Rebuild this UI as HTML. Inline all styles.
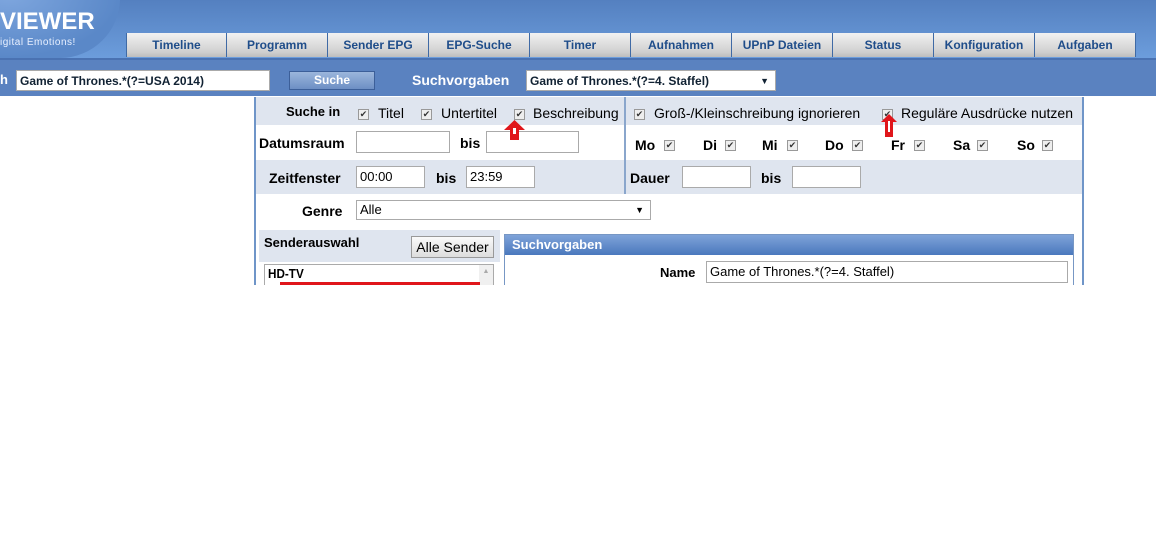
<!DOCTYPE html>
<html><head><meta charset="utf-8"><style>
*{margin:0;padding:0;box-sizing:border-box}
body{width:1156px;height:540px;background:#fff;position:relative;overflow:hidden;font-family:"Liberation Sans",Arial,sans-serif;font-size:13px;color:#000}
.a{position:absolute}
#hdr{left:0;top:0;width:1156px;height:58px;background:linear-gradient(180deg,#5480c0 0%,#6c9ddc 100%)}
#logo{left:-40px;top:-30px;width:160px;height:88px;border-radius:0 0 60px 0;background:radial-gradient(ellipse at 30% 30%,#7ea6de,#5a88c8 70%);}
.tab{top:33px;height:24px;width:101px;background:linear-gradient(180deg,#f2f2f2,#cfcfcf 80%,#bdbdbd);border-right:1px solid #3f6aa5;text-align:center;font-weight:bold;font-size:12px;color:#1f4d8a;line-height:25px}
#bar{left:0;top:58px;width:1156px;height:38px;background:#5a82c0;border-top:2px solid #4a72b2}
.in{background:#fff;border:1px solid #aaa;height:22px;font-size:12px;padding-left:3px;line-height:20px}
.lbl{font-weight:bold;font-size:13px}
.cb{display:inline-block;width:11px;height:11px;border:1px solid #999;background:#eee;font-size:9px;line-height:9px;text-align:center;color:#333}
</style></head><body>
<div id="hdr" class="a"></div>
<div id="logo" class="a"></div>
<div class="a" style="left:0;top:8px;font-size:24px;font-weight:bold;color:#fff;letter-spacing:0px">VIEWER</div>
<div class="a" style="left:0;top:37px;font-size:10px;color:#e8f0ff;letter-spacing:0.5px">igital Emotions!</div>
<div class="a tab" style="left:126px;border-left:1px solid #3f6aa5">Timeline</div>
<div class="a tab" style="left:227px">Programm</div>
<div class="a tab" style="left:328px">Sender EPG</div>
<div class="a tab" style="left:429px">EPG-Suche</div>
<div class="a tab" style="left:530px">Timer</div>
<div class="a tab" style="left:631px">Aufnahmen</div>
<div class="a tab" style="left:732px">UPnP Dateien</div>
<div class="a tab" style="left:833px">Status</div>
<div class="a tab" style="left:934px">Konfiguration</div>
<div class="a tab" style="left:1035px">Aufgaben</div>
<div id="bar" class="a"></div>
<div class="a" style="left:0;top:72px;color:#fff;font-weight:bold;font-size:13px">h</div>
<div class="a in" style="left:16px;top:70px;width:254px;height:21px;font-weight:bold;color:#123">Game of Thrones.*(?=USA 2014)</div>
<div class="a" style="left:289px;top:71px;width:86px;height:19px;background:linear-gradient(#9bb6dc,#6d8fc4);border:1px solid #3c5f99;color:#fff;font-weight:bold;font-size:12px;text-align:center;line-height:17px">Suche</div>
<div class="a" style="left:412px;top:72px;color:#fff;font-weight:bold;font-size:14px">Suchvorgaben</div>
<div class="a in" style="left:526px;top:70px;width:250px;height:21px;font-weight:bold;color:#123">Game of Thrones.*(?=4. Staffel)<span style="position:absolute;right:6px;font-size:9px">▼</span></div>

<div class="a" style="left:254px;top:97px;width:830px;height:188px;border-left:2px solid #6f95c8;border-right:2px solid #6f95c8"></div>
<div class="a" style="left:256px;top:97px;width:826px;height:28px;background:#dfe5ef"></div>
<div class="a" style="left:256px;top:160px;width:826px;height:34px;background:#dfe5ef"></div>
<div class="a" style="left:624px;top:97px;width:2px;height:97px;background:#8aa6cc"></div>

<div class="a lbl" style="left:286px;top:104px">Suche in</div>
<div class="a" style="left:358px;top:105px"><span class="cb">✔</span></div>
<div class="a" style="left:378px;top:105px;font-size:14px">Titel</div>
<div class="a" style="left:421px;top:105px"><span class="cb">✔</span></div>
<div class="a" style="left:441px;top:105px;font-size:14px">Untertitel</div>
<div class="a" style="left:514px;top:105px"><span class="cb">✔</span></div>
<div class="a" style="left:533px;top:105px;font-size:14px">Beschreibung</div>
<div class="a" style="left:634px;top:105px"><span class="cb">✔</span></div>
<div class="a" style="left:654px;top:105px;font-size:14px">Groß-/Kleinschreibung ignorieren</div>
<div class="a" style="left:882px;top:105px"><span class="cb">✔</span></div>
<div class="a" style="left:901px;top:105px;font-size:14px">Reguläre Ausdrücke nutzen</div>

<div class="a lbl" style="left:259px;top:135px;font-size:14px">Datumsraum</div>
<div class="a in" style="left:356px;top:131px;width:94px"></div>
<div class="a lbl" style="left:460px;top:135px;font-size:14px">bis</div>
<div class="a in" style="left:486px;top:131px;width:93px"></div>
<div class="a lbl" style="left:635px;top:137px;font-size:14px">Mo</div><div class="a" style="left:664px;top:136px"><span class="cb">✔</span></div>
<div class="a lbl" style="left:703px;top:137px;font-size:14px">Di</div><div class="a" style="left:725px;top:136px"><span class="cb">✔</span></div>
<div class="a lbl" style="left:762px;top:137px;font-size:14px">Mi</div><div class="a" style="left:787px;top:136px"><span class="cb">✔</span></div>
<div class="a lbl" style="left:825px;top:137px;font-size:14px">Do</div><div class="a" style="left:852px;top:136px"><span class="cb">✔</span></div>
<div class="a lbl" style="left:891px;top:137px;font-size:14px">Fr</div><div class="a" style="left:914px;top:136px"><span class="cb">✔</span></div>
<div class="a lbl" style="left:953px;top:137px;font-size:14px">Sa</div><div class="a" style="left:977px;top:136px"><span class="cb">✔</span></div>
<div class="a lbl" style="left:1017px;top:137px;font-size:14px">So</div><div class="a" style="left:1042px;top:136px"><span class="cb">✔</span></div>

<div class="a lbl" style="left:269px;top:170px;font-size:14px">Zeitfenster</div>
<div class="a in" style="left:356px;top:166px;width:69px;font-size:13px">00:00</div>
<div class="a lbl" style="left:436px;top:170px;font-size:14px">bis</div>
<div class="a in" style="left:466px;top:166px;width:69px;font-size:13px">23:59</div>
<div class="a lbl" style="left:630px;top:170px;font-size:14px">Dauer</div>
<div class="a in" style="left:682px;top:166px;width:69px"></div>
<div class="a lbl" style="left:761px;top:170px;font-size:14px">bis</div>
<div class="a in" style="left:792px;top:166px;width:69px"></div>

<div class="a lbl" style="left:302px;top:203px;font-size:14px">Genre</div>
<div class="a in" style="left:356px;top:200px;width:295px;height:20px;font-size:13px;line-height:18px">Alle<span style="position:absolute;right:6px;font-size:9px">▼</span></div>

<div class="a" style="left:259px;top:230px;width:241px;height:32px;background:#dfe5ef"></div>
<div class="a lbl" style="left:264px;top:235px">Senderauswahl</div>
<div class="a" style="left:411px;top:236px;width:83px;height:22px;background:linear-gradient(#fafafa,#ddd);border:1px solid #999;font-size:14px;text-align:center;line-height:20px">Alle Sender</div>
<div class="a" style="left:264px;top:264px;width:230px;height:21px;border:1px solid #aaa;border-bottom:none;background:#fff"></div>
<div class="a" style="left:268px;top:266px;font-size:13px;font-weight:bold;transform:scaleX(.9);transform-origin:left">HD-TV</div>
<div class="a" style="left:479px;top:265px;width:14px;height:20px;background:#f0f0f0;color:#aaa;font-size:7px;text-align:center;line-height:14px">▲</div>
<div class="a" style="left:280px;top:282px;width:200px;height:3px;background:#e0161b"></div>

<div class="a" style="left:504px;top:234px;width:570px;height:51px;border:1px solid #7797c4;border-bottom:none"></div>
<div class="a" style="left:505px;top:235px;width:568px;height:20px;background:linear-gradient(#7fa3d9,#4a78bd);color:#fff;font-weight:bold;font-size:13px;padding-left:7px;line-height:20px">Suchvorgaben</div>
<div class="a lbl" style="left:660px;top:265px">Name</div>
<div class="a in" style="left:706px;top:261px;width:362px;height:22px;font-size:13px">Game of Thrones.*(?=4. Staffel)</div>

<svg class="a" style="left:503px;top:119px;z-index:5" width="23" height="22"><path d="M11.5 1 L22 11 L16 11 L16 21 L7 21 L7 11 L1 11 Z" fill="#e0161b"/><rect x="10" y="9" width="3" height="6" fill="#fff"/></svg>
<svg class="a" style="left:880px;top:113px;z-index:5" width="18" height="25"><path d="M9 1 L17 9 L13 9 L13 24 L5 24 L5 9 L1 9 Z" fill="#e0161b"/><rect x="8" y="8" width="2" height="11" fill="#fff"/></svg>
</body></html>
